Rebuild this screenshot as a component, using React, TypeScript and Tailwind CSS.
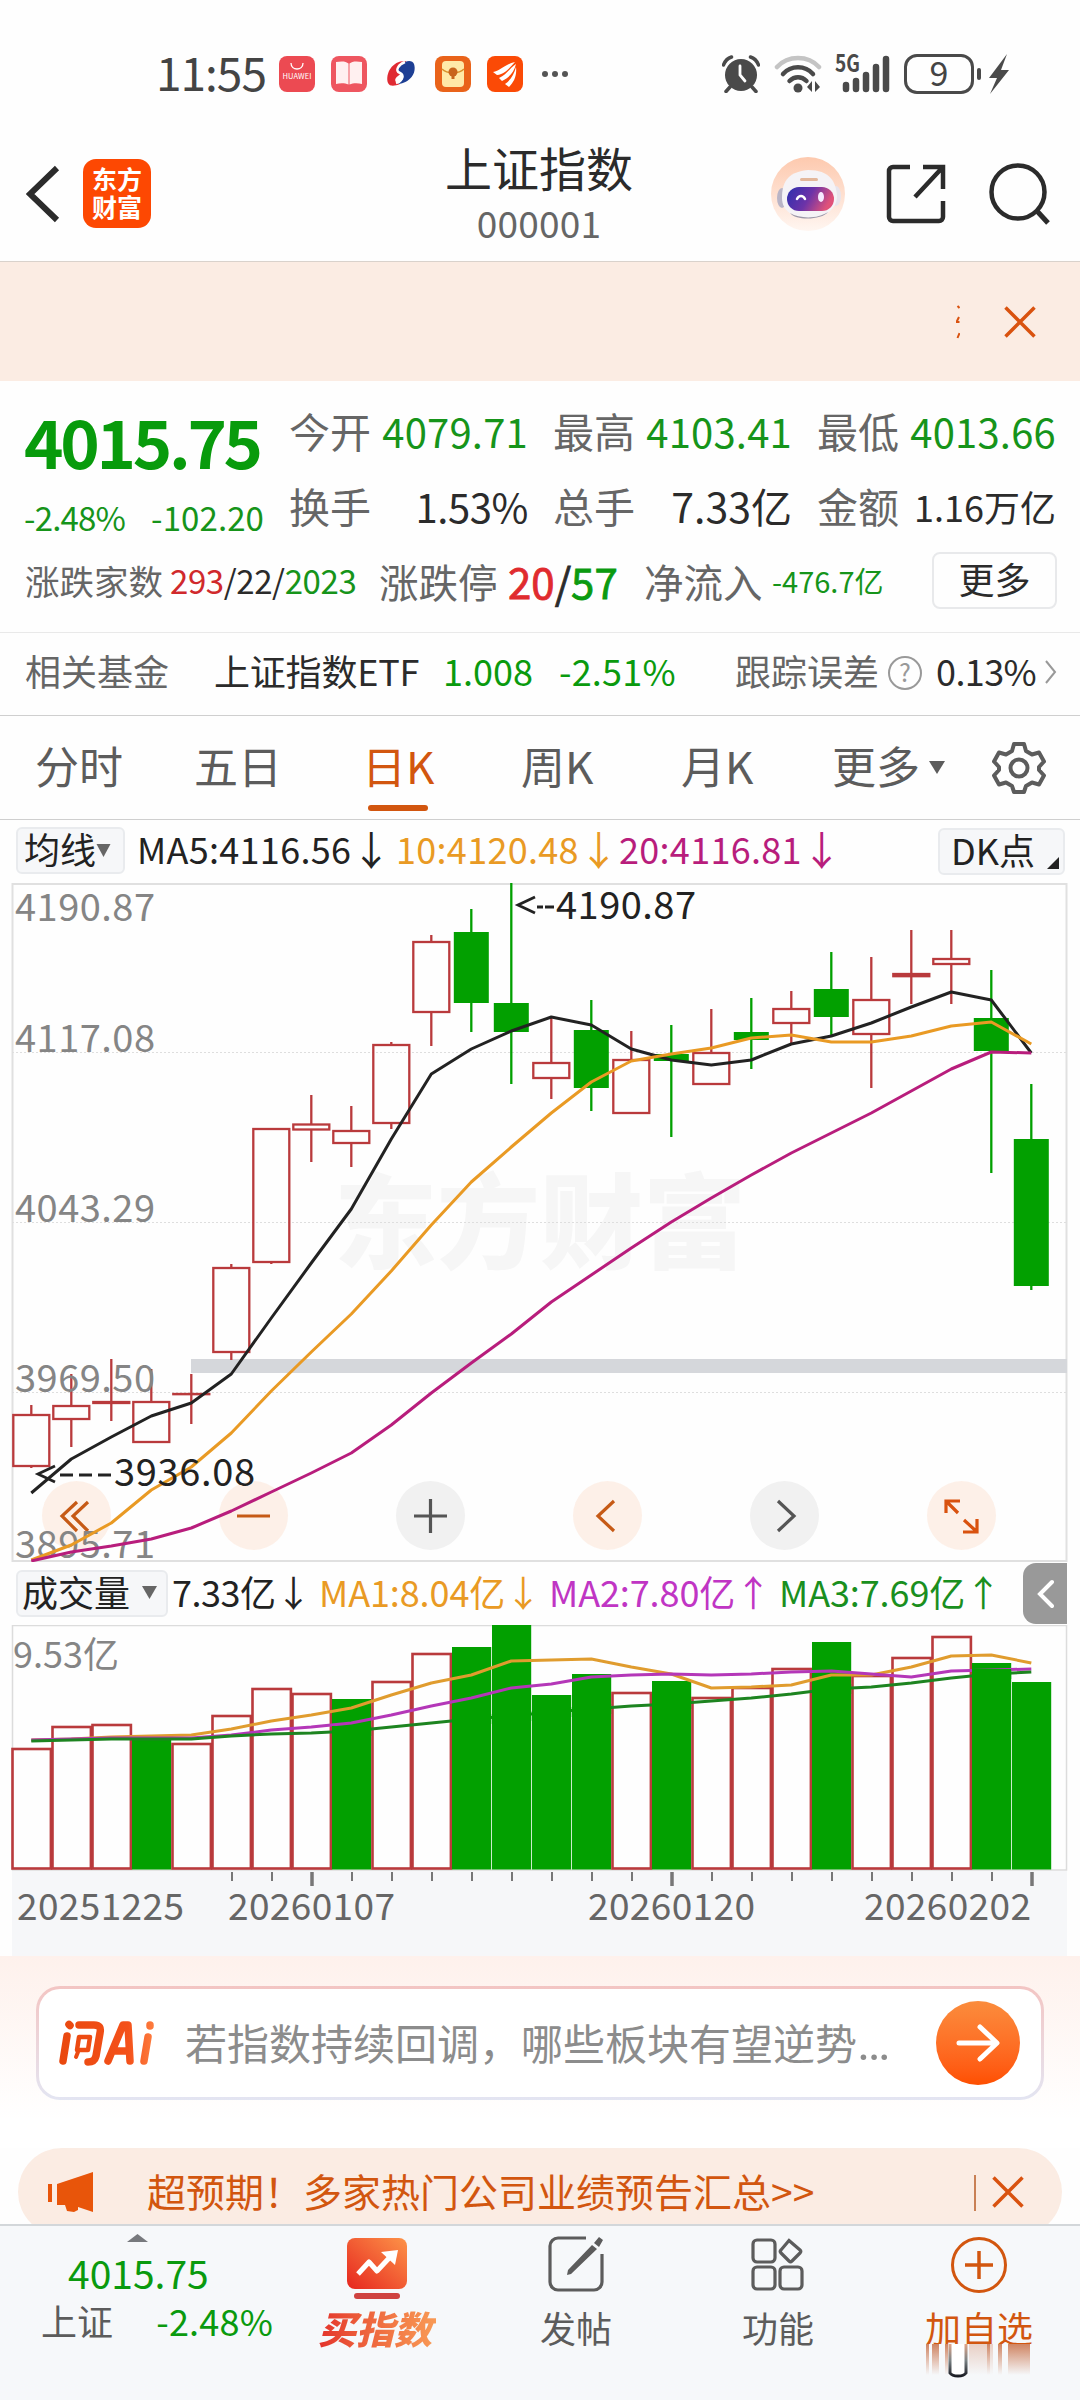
import React from 'react';

interface Candle {
  up: boolean;
  high: number;
  top: number;
  bottom: number;
  low: number;
}

const X0 = 31.3;
const STEP = 40;

const candles: Candle[] = [
  { up: true, high: 1405, top: 1415, bottom: 1466, low: 1468 },
  { up: true, high: 1374, top: 1406, bottom: 1419, low: 1447 },
  { up: true, high: 1359, top: 1402, bottom: 1403, low: 1421 },
  { up: true, high: 1369, top: 1402, bottom: 1442, low: 1442 },
  { up: true, high: 1374, top: 1394, bottom: 1394.2, low: 1424 },
  { up: true, high: 1264, top: 1268, bottom: 1352, low: 1360 },
  { up: true, high: 1129, top: 1129, bottom: 1262, low: 1264 },
  { up: true, high: 1095, top: 1124.5, bottom: 1129.5, low: 1162 },
  { up: true, high: 1106, top: 1131, bottom: 1143, low: 1167 },
  { up: true, high: 1042, top: 1045, bottom: 1123, low: 1129 },
  { up: true, high: 935, top: 942, bottom: 1012, low: 1046 },
  { up: false, high: 909, top: 932, bottom: 1003, low: 1032 },
  { up: false, high: 883, top: 1003, bottom: 1032, low: 1084 },
  { up: true, high: 1018, top: 1063, bottom: 1078, low: 1099 },
  { up: false, high: 1000, top: 1030, bottom: 1088, low: 1111 },
  { up: true, high: 1031, top: 1060, bottom: 1113, low: 1114 },
  { up: false, high: 1025, top: 1054, bottom: 1061, low: 1137 },
  { up: true, high: 1009, top: 1053, bottom: 1084, low: 1084 },
  { up: false, high: 998, top: 1032, bottom: 1040, low: 1069 },
  { up: true, high: 991, top: 1009, bottom: 1023, low: 1044 },
  { up: false, high: 952, top: 989, bottom: 1017, low: 1035 },
  { up: true, high: 957, top: 1000, bottom: 1034, low: 1088 },
  { up: true, high: 930, top: 974, bottom: 976.2, low: 1004 },
  { up: true, high: 930, top: 959, bottom: 964, low: 1004 },
  { up: false, high: 970, top: 1018, bottom: 1051, low: 1173 },
  { up: false, high: 1084, top: 1139, bottom: 1286, low: 1290 },
];

const ma5 = [1493, 1459, 1437, 1416, 1403, 1374, 1318, 1263, 1209, 1139, 1074, 1049, 1031, 1017, 1025, 1049, 1060, 1065, 1060, 1044, 1036, 1023, 1007, 992, 1000, 1053];
const ma10 = [1560, 1545, 1523, 1490, 1467, 1433, 1391, 1352, 1314, 1271, 1225, 1182, 1147, 1113, 1082, 1061, 1054, 1048, 1038, 1035, 1042, 1042, 1036, 1026, 1022, 1044];
const ma20 = [1561, 1552, 1546, 1539, 1528, 1511, 1492, 1473, 1453, 1425, 1393, 1363, 1334, 1302, 1275, 1248, 1222, 1198, 1175, 1153, 1133, 1113, 1091, 1069, 1052, 1053];

const volumeTops = [1749, 1727, 1725, 1737, 1744, 1716, 1689, 1694, 1699, 1682, 1654, 1647, 1625, 1695, 1674, 1693, 1681, 1698, 1688, 1669, 1642, 1676, 1658, 1637, 1663, 1682];
const volumeUp = [1, 1, 1, 0, 1, 1, 1, 1, 0, 1, 1, 0, 0, 0, 0, 1, 0, 1, 1, 1, 0, 1, 1, 1, 0, 0];
const vol1 = [1740, 1739, 1737, 1736, 1735, 1729, 1721, 1715, 1708, 1695, 1683, 1675, 1661, 1660, 1659, 1667, 1674, 1688, 1687, 1685, 1675, 1675, 1667, 1656, 1655, 1663];
const vol2 = [1740, 1739, 1738, 1738, 1738, 1735, 1730, 1727, 1723, 1715, 1706, 1698, 1688, 1684, 1677, 1675, 1674, 1675, 1674, 1672, 1671, 1674, 1677, 1671, 1670, 1669];
const vol3 = [1741, 1740, 1739, 1739, 1739, 1736, 1734, 1733, 1731, 1727, 1723, 1719, 1716, 1712, 1709, 1706, 1704, 1701, 1698, 1694, 1689, 1687, 1683, 1678, 1674, 1672];

const RED = '#b93a3c';
const GREEN = '#02a000';

const toPoints = (ys: number[]) => ys.map((y, i) => `${X0 + STEP * i},${y}`).join(' ');

const StatusBar: React.FC = () => (
  <div className="flex h-[126px] shrink-0 items-center pt-[22px] text-[#444]">
    <span className="ml-[156px] w-[123px] pb-[6px] text-[46px] leading-none tracking-[-1px]">11:55</span>
    <div className="flex items-center gap-4">
      <svg className="h-9 w-9" viewBox="0 0 36 36">
        <rect width="36" height="36" rx="8" fill="#ec4a52" />
        <path d="M12 7c0 8 12 8 12 0" fill="none" stroke="#fff" strokeWidth="1.3" />
        <text x="3.5" y="23" fontSize="7.5" fill="#fff" textLength="29">HUAWEI</text>
      </svg>
      <svg className="h-9 w-9" viewBox="0 0 36 36">
        <rect width="36" height="36" rx="8" fill="#ee5660" />
        <path d="M5 6c5-1 10-1 12.500 1.500v21C14 27 9 27 5 28zM31 6c-5-1-10-1-12.500 1.500v21C22 27 27 27 31 28z" fill="#fff0f0" />
      </svg>
      <svg className="h-9 w-9" viewBox="0 0 36 36">
        <path d="M23 5C10 4 2 17 5 27c2 4 7 3 12 1-6-2-6-5-2-8 5-3 4-8 8-15z" fill="#e02a32" />
        <path d="M22 6c-6 2-11 9-5 11 6 3 3 8-2 11 12-1 19-11 16-20-1-3-5-4-9-2z" fill="#1d3f94" />
        <path d="M22 6c-6 2-11 9-5 11 5 2 2 8-4 10" fill="none" stroke="#fff" strokeWidth="2.500" />
      </svg>
      <svg className="h-9 w-9" viewBox="0 0 36 36">
        <rect width="36" height="36" rx="8" fill="#e9631a" />
        <rect x="7" y="5" width="22" height="26" rx="4" fill="#ffe9a8" />
        <path d="M7 13c5 5 17 5 22 0" fill="none" stroke="#d9912c" strokeWidth="1.500" />
        <circle cx="18" cy="16" r="4.500" fill="#c8641c" />
        <path d="M18 16v7" stroke="#c8641c" strokeWidth="3" />
      </svg>
      <svg className="h-9 w-9" viewBox="0 0 36 36">
        <rect width="36" height="36" rx="8" fill="#fb4a06" />
        <path d="M6 16C13 15 18 8 28 6c-5 5-9 12-18 13zM12 22c7-3 10-9 17-14-2 8-6 13-14 17zM18 28c6-4 9-10 11-17 1 9-2 15-7 20z" fill="#fff" />
      </svg>
    </div>
    <div className="ml-[19px] flex gap-[4px]">
      <i className="h-[6px] w-[6px] rounded-full bg-[#555]" />
      <i className="h-[6px] w-[6px] rounded-full bg-[#555]" />
      <i className="h-[6px] w-[6px] rounded-full bg-[#555]" />
    </div>
    <svg className="ml-[154px] h-[38px] w-[38px]" viewBox="0 0 38 38">
      <ellipse cx="19" cy="20" rx="16" ry="16" fill="#4a4a4a" />
      <path d="M18 11v9l5 6" fill="none" stroke="#fff" strokeWidth="2.800" strokeLinecap="round" />
      <path d="M1.500 10C3 6 6 3 9.500 2M36.500 10C35 6 32 3 28.500 2M8 32l-4 4.500M30 32l4 4.500" fill="none" stroke="#4a4a4a" strokeWidth="3.500" strokeLinecap="round" />
    </svg>
    <svg className="ml-[14px] h-[40px] w-[48px]" viewBox="0 0 48 40">
      <g fill="none" strokeWidth="4.500" strokeLinecap="round">
        <path d="M3 13C14 1 34 1 45 13" stroke="#c4c4c4" />
        <path d="M9 20c8-9 22-9 30 0" stroke="#4a4a4a" />
        <path d="M15.500 27c5-5 12-5 17 0" stroke="#4a4a4a" />
      </g>
      <circle cx="24" cy="34" r="4.500" fill="#4a4a4a" />
      <path d="M38 27v11l-5-5zM41 38V27l5 6z" fill="#4a4a4a" />
    </svg>
    <svg className="ml-[13px] h-[40px] w-[56px]" viewBox="0 0 56 40">
      <text x="0" y="18" fontSize="24" fontWeight="700" fill="#4a4a4a" textLength="25" lengthAdjust="spacingAndGlyphs">5G</text>
      <g stroke="#4a4a4a" strokeWidth="6.500" strokeLinecap="round">
        <path d="M11 31v4M21 27v8M31 21v14M41 13v22M51 5v30" />
      </g>
    </svg>
    <div className="ml-[13px] flex h-[40px] w-[70px] items-center justify-center rounded-[13px] border-3 border-[#4a4a4a] pb-1 text-[34px] leading-none">9</div>
    <i className="ml-[3px] h-[12px] w-[4px] rounded bg-[#4a4a4a]" />
    <svg className="ml-[8px] h-[40px] w-[20px]" viewBox="0 0 20 40">
      <path d="M18 0L0 24h8L1 40l19-24h-8z" fill="#4a4a4a" />
    </svg>
  </div>
);

const Header: React.FC = () => (
  <div className="flex h-[136px] shrink-0 items-center border-b border-[#d9d2cc]">
    <svg className="ml-[26px] h-[60px] w-[34px]" viewBox="0 0 34 60">
      <path d="M31 4L4 30l27 26" fill="none" stroke="#2b2b2b" strokeWidth="6" />
    </svg>
    <div className="ml-[23px] flex h-[69px] w-[68px] flex-col items-center justify-center rounded-[13px] bg-[#fd4802] pb-1 text-[25px] leading-[28px] font-bold text-white">
      <span>东方</span>
      <span>财富</span>
    </div>
    <div className="flex w-[776px] flex-col items-center pb-[4px]">
      <div className="text-[47px] leading-[48px] text-[#2b2b2b]">上证指数</div>
      <div className="mt-[13px] text-[37px] leading-[36px] tracking-[0.2px] text-[#666]">000001</div>
    </div>
    <div className="-ml-[157px] flex items-center">
      <svg className="h-[76px] w-[76px]" viewBox="0 0 76 76">
        <defs>
          <linearGradient id="halo" x1="0" y1="0" x2="0" y2="1">
            <stop offset="0" stopColor="#fdc9ae" />
            <stop offset="1" stopColor="#fff6f1" />
          </linearGradient>
          <linearGradient id="visor" x1="0" y1="0" x2="1" y2="0.3">
            <stop offset="0" stopColor="#2c2fae" />
            <stop offset="0.55" stopColor="#6d33a8" />
            <stop offset="1" stopColor="#e0527a" />
          </linearGradient>
        </defs>
        <circle cx="38" cy="38" r="37" fill="url(#halo)" />
        <ellipse cx="12" cy="42" rx="5" ry="10" fill="#b9b4c6" />
        <ellipse cx="66" cy="40" rx="5" ry="10" fill="#e8e4ec" />
        <path d="M12 42c0-14 4-26 26-28 22 0 28 12 29 26 0 13-12 22-28 22S12 55 12 42z" fill="#f5f3f6" />
        <rect x="30" y="22" width="18" height="3" rx="1.500" fill="#e3b79b" />
        <path d="M20 57c10 6 28 6 38-1-6 8-32 9-38 1z" fill="#9b97a8" />
        <rect x="17" y="31" width="47" height="24" rx="12" fill="url(#visor)" />
        <path d="M27 43c2-4 6-4 8 0" fill="none" stroke="#fff" strokeWidth="2.500" strokeLinecap="round" />
        <ellipse cx="51" cy="41" rx="3" ry="5" fill="#f6e9ff" />
      </svg>
      <svg className="ml-[39px] h-[62px] w-[62px]" viewBox="0 0 62 62">
        <path d="M25 4H8a4 4 0 0 0-4 4v46a4 4 0 0 0 4 4h46a4 4 0 0 0 4-4V38M38 4h20v22M57 5L30 34" fill="none" stroke="#2b2b2b" strokeWidth="4.500" />
      </svg>
      <svg className="ml-[42px] h-[62px] w-[62px]" viewBox="0 0 62 62">
        <circle cx="29" cy="29" r="26.500" fill="none" stroke="#2b2b2b" strokeWidth="4.500" />
        <path d="M48 48l11 12" stroke="#2b2b2b" strokeWidth="5" />
      </svg>
    </div>
  </div>
);

const CloseIcon: React.FC<{ className: string }> = ({ className }) => (
  <svg className={className} viewBox="0 0 32 32">
    <path d="M1.500 1.500l29 29M30.500 1.500l-29 29" fill="none" stroke="#d9520f" strokeWidth="3.500" />
  </svg>
);

const TopNotice: React.FC = () => (
  <div className="flex h-[119px] shrink-0 items-center justify-end bg-[#fbece3] pr-[44px]">
    <svg className="mr-[44px] h-[34px] w-[4px]" viewBox="0 0 4 34">
      <path d="M1.500 1l2 2M3 12l-2.500 5h3M3.500 28l-2 5" fill="none" stroke="#d9520f" strokeWidth="2" />
    </svg>
    <CloseIcon className="h-8 w-8" />
  </div>
);

const quoteCells = [
  { label: '今开', value: '4079.71', style: 'text-[40px] tracking-[0.2px] text-[#16941a]' },
  { label: '最高', value: '4103.41', style: 'text-[40px] tracking-[0.2px] text-[#16941a]' },
  { label: '最低', value: '4013.66', style: 'text-[40px] tracking-[0.2px] text-[#16941a]' },
  { label: '换手', value: '1.53%', style: 'text-[40px] text-[#2b2b2b] tracking-[-0.4px]' },
  { label: '总手', value: '7.33亿', style: 'text-[41px] text-[#2b2b2b]' },
  { label: '金额', value: '1.16万亿', style: 'text-[36px] text-[#2b2b2b]' },
];

const Quote: React.FC = () => (
  <div className="shrink-0 whitespace-nowrap">
    <div className="flex h-[169px] pt-[12px] leading-none">
      <div className="w-[264px] pt-[2px] pl-[24px] text-[#16941a]">
        <div className="flex h-[88px] items-center text-[67px] font-bold tracking-[-3.3px] text-[#089b0c]">4015.75</div>
        <div className="flex h-[68px] items-center justify-between text-[33px]">
          <span className="tracking-[-0.8px]">-2.48%</span>
          <span className="tracking-[0.1px]">-102.20</span>
        </div>
      </div>
      <div className="ml-[25px] grid w-[768px] grid-cols-[239px_239px_239px] grid-rows-[75px_75px] gap-x-[25px]">
        {quoteCells.map((cell) => (
          <div key={cell.label} className="flex items-center justify-between">
            <span className="text-[41px] text-[#666]">{cell.label}</span>
            <span className={cell.style}>{cell.value}</span>
          </div>
        ))}
      </div>
    </div>
    <div className="flex h-[82px] items-center pb-[21px] leading-none text-[#666]">
      <span className="ml-[25px] w-[145px] text-[34.500px]">涨跌家数</span>
      <span className="w-[209px] text-[33px] tracking-[-0.4px] text-[#2b2b2b]">
        <span className="text-[#d0292c]">293</span>/22/<span className="text-[#16941a]">2023</span>
      </span>
      <span className="w-[129px] text-[39.500px]">涨跌停</span>
      <span className="w-[136px] text-[42px] text-[#2b2b2b] [-webkit-text-stroke:0.8px]">
        <span className="text-[#e02b2e]">20</span>/<span className="text-[#0b9a10]">57</span>
      </span>
      <span className="w-[128px] text-[39.500px]">净流入</span>
      <span className="w-[160px] text-[29px] text-[#16941a]">-476.7亿</span>
      <span className="flex h-[57px] w-[125px] items-center justify-center rounded-lg border-2 border-[#e8e9eb] pb-[5px] text-[36px] text-[#2b2b2b]">更多</span>
    </div>
  </div>
);

const FundRow: React.FC = () => (
  <div className="flex h-[84px] shrink-0 items-center border-y border-t-[#e9e9e9] border-b-[#cfcfcf] pb-[9px] text-[36px] leading-none whitespace-nowrap text-[#2b2b2b]">
    <span className="ml-[25px] w-[189px] text-[#666]">相关基金</span>
    <span className="w-[229px] tracking-[-0.2px]">上证指数ETF</span>
    <span className="w-[116px] text-[#0a9a0e]">1.008</span>
    <span className="w-[176px] tracking-[0.2px] text-[#0a9a0e]">-2.51%</span>
    <span className="text-[#666]">跟踪误差</span>
    <span className="mt-[7px] ml-[9px] flex h-[34px] w-[34px] items-center justify-center rounded-full border-2 border-[#999] pb-1 text-[25px] text-[#999]">?</span>
    <span className="ml-[14px] tracking-[-0.6px]">0.13%</span>
    <svg className="mt-1 ml-[9px] h-[24px] w-[12px]" viewBox="0 0 12 24">
      <path d="M1 1l9 11-9 11" fill="none" stroke="#999" strokeWidth="2" />
    </svg>
  </div>
);

const Tabs: React.FC = () => (
  <div className="flex h-[104px] shrink-0 items-center border-b border-[#cfcfcf] text-[44px] leading-none whitespace-nowrap text-[#5c5c5c]">
    <span className="ml-[35px] w-[159px] pb-[6px]">分时</span>
    <span className="w-[168px] pb-[6px]">五日</span>
    <span className="relative w-[159px] pb-[6px] text-[#d2560f]">
      日K
      <i className="absolute top-[62px] left-[6px] h-[6px] w-[60px] rounded-full bg-[#d2560f]" />
    </span>
    <span className="w-[160px] pb-[6px]">周K</span>
    <span className="w-[151px] pb-[6px]">月K</span>
    <span className="pb-[6px]">更多</span>
    <svg className="ml-[9px] h-[13px] w-[16px]" viewBox="0 0 16 13">
      <path d="M0 0h16L8 13z" fill="#5c5c5c" />
    </svg>
    <svg className="ml-[47px] h-[52px] w-[54px]" viewBox="0 0 54 52">
      <path d="M22 2h10l2 7 6 3.500 7-2 5 9-5 5.500v3l5 5.500-5 9-7-2-6 3.500-2 6H22l-2-6-6-3.500-7 2-5-9L7 28v-3l-5-5.500 5-9 7 2L20 9z" fill="none" stroke="#5c5c5c" strokeWidth="4" strokeLinejoin="round" />
      <circle cx="27" cy="26" r="8.500" fill="none" stroke="#5c5c5c" strokeWidth="4" />
    </svg>
  </div>
);

const MaRow: React.FC = () => (
  <div className="flex h-[63px] shrink-0 items-center pb-[3px] text-[36px] leading-none whitespace-nowrap text-[#222]">
    <span className="ml-[16px] flex h-[47px] w-[109px] items-center rounded-md border-2 border-[#e9ebee] bg-[#f6f7f9] pb-1 pl-[6px]">
      均线
      <svg className="mt-1 h-[13px] w-[15px]" viewBox="0 0 14 13">
        <path d="M0 0h14L7 13z" fill="#666" />
      </svg>
    </span>
    <span className="ml-[12px] flex w-[259px] items-center pb-1 tracking-[0.3px]">
      MA5:4116.56<span className="text-[40px]">↓</span>
    </span>
    <span className="flex w-[223px] items-center pb-1 tracking-[0.3px] text-[#e99a24]">
      10:4120.48<span className="text-[40px]">↓</span>
    </span>
    <span className="flex w-[319px] items-center pb-1 tracking-[0.3px] text-[#b81d7c]">
      20:4116.81<span className="text-[40px]">↓</span>
    </span>
    <span className="relative mt-[3px] flex h-[47px] w-[127px] items-center rounded-md border-2 border-[#e9ebee] bg-[#f6f7f9] pb-[6px] pl-[11px]">
      DK点
      <svg className="absolute right-[4px] bottom-[4px] h-[12px] w-[12px]" viewBox="0 0 12 12">
        <path d="M12 0v12H0z" fill="#222" />
      </svg>
    </span>
  </div>
);

const priceLabels = [
  { text: '4190.87', y: 921 },
  { text: '4117.08', y: 1052 },
  { text: '4043.29', y: 1221.5 },
  { text: '3969.50', y: 1391.5 },
  { text: '3895.71', y: 1558 },
];

const controls = [
  { name: 'first', circle: 'bg-[#fdeee6]/90 text-[#c65a16]', path: 'M35 21L20 35l15 15M46 21L31 35l15 15' },
  { name: 'out', circle: 'bg-[#fdeee6]/90 text-[#c65a16]', path: 'M18 35h33' },
  { name: 'in', circle: 'bg-[#f1f1f1] text-[#555]', path: 'M18 35h33M34.500 18v34' },
  { name: 'prev', circle: 'bg-[#fdeee6]/90 text-[#c65a16]', path: 'M41 20L25 35l16 15' },
  { name: 'next', circle: 'bg-[#f1f1f1] text-[#555]', path: 'M28 20l16 15-16 15' },
  { name: 'full', circle: 'bg-[#fdeee6]/90 text-[#d9520f]', path: 'M19 32V20h14M20 21l11 11M50 38v13H36M49 50L37 39' },
];

const PriceChart: React.FC = () => (
  <div className="relative h-[679px] shrink-0">
    <svg className="block h-[679px] w-[1080px]" viewBox="0 883 1080 679">
      <rect x="12.500" y="884" width="1054" height="677" fill="none" stroke="#e0e0e0" strokeWidth="2" />
      <text x="334" y="1261" fontSize="103" fontWeight="900" fill="#f6f6f6" textLength="412">东方财富</text>
      {[1052.5, 1222.5, 1392.5].map((y) => (
        <path key={y} d={`M12 ${y}h1055`} stroke="#dedede" strokeDasharray="2 2" />
      ))}
      <rect x="191" y="1359" width="876" height="14" fill="#d5d7db" />
    </svg>
    <div className="absolute top-[598px] left-[42px] flex gap-[108px]">
      {controls.map((c) => (
        <div key={c.name} className={`h-[69px] w-[69px] rounded-full ${c.circle}`}>
          <svg viewBox="0 0 69 69">
            <path d={c.path} fill="none" stroke="currentColor" strokeWidth="3.200" />
          </svg>
        </div>
      ))}
    </div>
    <svg className="absolute top-0 left-0 h-[679px] w-[1080px]" viewBox="0 883 1080 679">
      {candles.map((c, i) => {
        const x = X0 + STEP * i;
        const color = c.up ? RED : GREEN;
        return (
          <g key={i} stroke={color} strokeWidth="2.300">
            <path d={`M${x} ${c.high}V${c.top}M${x} ${c.bottom}V${c.low}`} />
            {c.up ? (
              <rect x={x - 18} y={c.top} width="36" height={c.bottom - c.top} fill="none" />
            ) : (
              <rect x={x - 17.5} y={c.top} width="35" height={c.bottom - c.top} fill={GREEN} stroke="none" />
            )}
          </g>
        );
      })}
      <g fontSize="38" fill="#858585">
        {priceLabels.map((l) => (
          <text key={l.text} x="15" y={l.y} textLength="140">{l.text}</text>
        ))}
      </g>
      <g fill="none" strokeWidth="3" strokeLinejoin="round">
        <polyline points={toPoints(ma5)} stroke="#222" />
        <polyline points={toPoints(ma10)} stroke="#e99a24" />
        <polyline points={toPoints(ma20)} stroke="#b81d7c" />
      </g>
      <g fontSize="38" fill="#222">
        <text x="556" y="919" textLength="140">4190.87</text>
        <text x="114" y="1486" textLength="141">3936.08</text>
      </g>
      <g fill="none" stroke="#222" strokeWidth="2.800">
        <path d="M535 897l-17 8 17 8M537 907h6M545 907h9" />
        <path d="M55 1466l-17 8 17 8M60 1475h13M79 1475h13M98 1475h13" />
      </g>
    </svg>
  </div>
);

const VolumeHeader: React.FC = () => (
  <div className="flex h-[63px] shrink-0 items-center text-[36px] leading-none whitespace-nowrap text-[#222]">
    <span className="ml-[16px] flex h-[47px] w-[152px] items-center rounded-md border-2 border-[#e9ebee] bg-[#f6f7f9] pb-[6px] pl-[4px]">
      成交量
      <svg className="mt-1 ml-[12px] h-[13px] w-[15px]" viewBox="0 0 15 13">
        <path d="M0 0h15L7.500 13z" fill="#666" />
      </svg>
    </span>
    <span className="ml-[4px] w-[147px] pb-[6px] tracking-[-0.5px]">7.33亿↓</span>
    <span className="w-[230px] pb-[6px] tracking-[-0.1px] text-[#e99a24]">MA1:8.04亿↓</span>
    <span className="w-[230px] pb-[6px] tracking-[-0.1px] text-[#c035c4]">MA2:7.80亿↑</span>
    <span className="w-[244px] pb-[6px] tracking-[-0.1px] text-[#1a8f1e]">MA3:7.69亿↑</span>
    <span className="flex h-[61px] w-[44px] items-center justify-center rounded-l-[13px] bg-[#999]">
      <svg className="h-[30px] w-[18px]" viewBox="0 0 18 30">
        <path d="M16 3L4 15l12 12" fill="none" stroke="#fff" strokeWidth="4" strokeLinecap="round" />
      </svg>
    </span>
  </div>
);

const dates = [
  { text: '20251225', x: 17 },
  { text: '20260107', x: 228 },
  { text: '20260120', x: 588 },
  { text: '20260202', x: 864 },
];

const VolumeChart: React.FC = () => (
  <svg className="block h-[331px] w-[1080px] shrink-0" viewBox="0 1625 1080 331">
    <rect x="12" y="1871" width="1055" height="85" fill="#f6f7f9" />
    <rect x="12.500" y="1625.500" width="1054" height="244.500" fill="none" stroke="#dcdcdc" strokeWidth="1.500" />
    <text x="13" y="1668" fontSize="36" fill="#858585">9.53亿</text>
    {volumeTops.map((top, i) => {
      const x = X0 + STEP * i;
      return volumeUp[i] ? (
        <rect key={i} x={x - 18.8} y={top} width="38.400" height={1868.5 - top} fill="none" stroke={RED} strokeWidth="2.600" />
      ) : (
        <rect key={i} x={x - 19.3} y={top} width="39.200" height={1869.5 - top} fill={GREEN} />
      );
    })}
    <g fill="none" strokeWidth="3" strokeLinejoin="round">
      <polyline points={toPoints(vol1)} stroke="#e09c2e" />
      <polyline points={toPoints(vol2)} stroke="#b437b8" />
      <polyline points={toPoints(vol3)} stroke="#1d8420" />
    </g>
    {/* the MA3 line merges with the solid bars it crosses */}
    {volumeTops.map((top, i) =>
      volumeUp[i] || vol3[i] - top < 9 ? null : (
        <rect key={i} x={X0 + STEP * i - 19.3} y={vol3[i] - 5} width="39.200" height="10" fill={GREEN} />
      )
    )}
    {Array.from({ length: 21 }, (_, k) => {
      const i = k + 5;
      const major = i === 7 || i === 16 || i === 25;
      return <path key={i} d={`M${X0 + 0.7 + STEP * i} 1872v${major ? 14 : 9}`} stroke="#777" strokeWidth={major ? 3.5 : 2} />;
    })}
    <g fontSize="37" fill="#666">
      {dates.map((d) => (
        <text key={d.text} x={d.x} y="1920" textLength="167">{d.text}</text>
      ))}
    </g>
  </svg>
);

const AskAi: React.FC = () => (
  <div className="h-[192px] shrink-0 bg-linear-to-b from-[#fef1ec] to-white to-85% px-[36px] pt-[30px]">
    <div className="h-[114px] rounded-[24px] bg-linear-to-b from-[#f3c5c3] to-[#e3e5f2] p-[3px]">
      <div className="flex h-full items-center rounded-[21px] bg-white">
        <svg className="ml-[19px] h-[48px] w-[100px] shrink-0" viewBox="0 0 100 48">
          <defs>
            <linearGradient id="ask" gradientUnits="userSpaceOnUse" x1="0" y1="0" x2="100" y2="0">
              <stop offset="0" stopColor="#e9480e" />
              <stop offset="0.7" stopColor="#f4511a" />
              <stop offset="1" stopColor="#ff8344" />
            </linearGradient>
          </defs>
          <g fill="none" stroke="url(#ask)" strokeLinejoin="round" strokeLinecap="round">
            <path d="M9 17L5 42M11 5.500l1 1M21 6h15c6 0 7 3 6 8l-4 23c-1 4-3 6-8 6M50 42L65 6h5l2 36M58 32h13M90 18l-4 24M92 6v1" strokeWidth="7.500" />
            <path d="M21 18h11l-2 13H19z" strokeWidth="4.500" />
            <path d="M20 33l-2 5" strokeWidth="4" />
          </g>
        </svg>
        <span className="ml-[27px] text-[42px] leading-none whitespace-nowrap text-[#8c8c8c]">
          若指数持续回调，哪些板块有望逆势<span className="font-['Roboto'] text-[50px] leading-none">…</span>
        </span>
        <span className="mr-[21px] ml-auto flex h-[84px] w-[84px] shrink-0 items-center justify-center rounded-full bg-linear-to-t from-[#fe4f00] to-[#fb8c3c]">
          <svg className="h-[40px] w-[44px]" viewBox="0 0 44 40">
            <path d="M3 20h37M24 4l17 16-17 16" fill="none" stroke="#fff" strokeWidth="5" strokeLinecap="round" strokeLinejoin="round" />
          </svg>
        </span>
      </div>
    </div>
  </div>
);

const PromoBar: React.FC = () => (
  <div className="h-[76px] shrink-0 overflow-hidden px-[18px]">
    <div className="flex h-[88px] items-center rounded-[44px] bg-[#fbece3]">
      <svg className="ml-[30px] h-[40px] w-[46px]" viewBox="0 0 46 40">
        <path d="M0 12h4v18H0zM9 12L45 0v40L30 35v3l-4 2-7-1-2-6H9z" fill="#e8550a" />
      </svg>
      <span className="ml-[53px] w-[827px] pb-1 text-[39px] leading-none whitespace-nowrap text-[#d2560f]">超预期！多家热门公司业绩预告汇总&gt;&gt;</span>
      <i className="mt-[2px] h-[36px] w-[2px] bg-[#c98055]" />
      <CloseIcon className="ml-[16px] h-8 w-8" />
    </div>
  </div>
);

const BottomNav: React.FC = () => (
  <div className="flex h-[176px] shrink-0 items-start border-t-2 border-[#d3d7da] bg-[#f6f8fa] leading-none whitespace-nowrap">
    <div className="ml-[41px] w-[232px] pt-[8px]">
      <svg className="ml-[86px] h-[8px] w-[21px]" viewBox="0 0 21 8">
        <path d="M0 8L10.500 0 21 8z" fill="#77797d" />
      </svg>
      <div className="mt-[11px] ml-[27px] text-[39px] text-[#0a9a0e]">4015.75</div>
      <div className="mt-[10px] flex justify-between text-[36px]">
        <span className="text-[#5c5c5c]">上证</span>
        <span className="tracking-[0.2px] text-[#0a9a0e]">-2.48%</span>
      </div>
    </div>
    <div className="ml-[36px] flex w-[136px] flex-col items-center pt-[12px]">
      <svg className="h-[62px] w-[60px]" viewBox="0 0 60 62">
        <defs>
          <linearGradient id="buy" x1="0" y1="1" x2="1" y2="0">
            <stop offset="0" stopColor="#e6261f" />
            <stop offset="1" stopColor="#fd9348" />
          </linearGradient>
        </defs>
        <rect width="60" height="51" rx="8" fill="url(#buy)" />
        <rect x="7" y="55" width="46" height="6" rx="3" fill="#cf4340" />
        <path d="M11 36L22 24l8 9 14-15" fill="none" stroke="#fff" strokeWidth="5" strokeLinejoin="round" />
        <path d="M34 14l17-2-3 15z" fill="#fff" />
      </svg>
      <span className="mt-[9px] bg-linear-to-r from-[#e3302b] to-[#f89a55] bg-clip-text pr-1 pb-2 text-[38px] font-black text-transparent italic">买指数</span>
    </div>
    <div className="ml-[63px] flex w-[136px] flex-col items-center pt-[10px] text-[#5c5c5c]">
      <svg className="h-[56px] w-[56px]" viewBox="0 0 56 56">
        <path d="M38 2H10a8 8 0 0 0-8 8v36a8 8 0 0 0 8 8h36a8 8 0 0 0 8-8V18" fill="none" stroke="currentColor" strokeWidth="3.200" />
        <path d="M46 7l5-6 4 3-4 7zM44 9l5 4-26 25-4 1 1-5z" fill="currentColor" />
      </svg>
      <span className="mt-[17px] text-[36px]">发帖</span>
    </div>
    <div className="ml-[66px] flex w-[136px] flex-col items-center pt-[11px] text-[#5c5c5c]">
      <svg className="h-[55px] w-[54px]" viewBox="0 0 54 55">
        <g fill="none" stroke="currentColor" strokeWidth="3.200">
          <rect x="2" y="3" width="22" height="22" rx="4" />
          <path d="M38 3.500L49 13q1.500 1.500 0 3L41 24q-1.500 1.500-3 0L30 16q-1.500-1.500 0-3z" />
          <rect x="2" y="30" width="22" height="22" rx="4" />
          <rect x="29" y="30" width="22" height="22" rx="4" />
        </g>
      </svg>
      <span className="mt-[17px] text-[36px]">功能</span>
    </div>
    <div className="ml-[65px] flex w-[136px] flex-col items-center pt-[10px] text-[#d2560f]">
      <svg className="h-[58px] w-[58px]" viewBox="0 0 58 58">
        <circle cx="29" cy="29" r="26.500" fill="none" stroke="currentColor" strokeWidth="3" />
        <path d="M15 29h28M29 15v28" stroke="currentColor" strokeWidth="3.500" />
      </svg>
      <span className="relative mt-[15px] text-[36px]">
        加自选
        {/* streaks fading out under the label */}
        <svg className="absolute top-[35px] left-0 h-[36px] w-[110px]" viewBox="0 0 110 36">
          <defs>
            <linearGradient id="streak" gradientUnits="userSpaceOnUse" x1="0" y1="0" x2="0" y2="31">
              <stop offset="0" stopColor="#cf8462" />
              <stop offset="1" stopColor="#f6f8fa" />
            </linearGradient>
            <linearGradient id="hook" gradientUnits="userSpaceOnUse" x1="0" y1="0" x2="0" y2="33">
              <stop offset="0" stopColor="#e0a488" />
              <stop offset="0.5" stopColor="#7c8486" />
              <stop offset="1" stopColor="#16171f" />
            </linearGradient>
          </defs>
          <rect width="110" height="36" fill="#f6f8fa" />
          <path d="M1 0h3v31H1zM7 0h7v31H7zM20 0h3v31h-3zM62 0h3v31h-3zM73 0h4v31h-4zM83 0h22v31H83z" fill="url(#streak)" />
          <path d="M44 0h18v31H44zM65 0h3v31h-3z" fill="url(#streak)" opacity="0.35" />
          <path d="M25 0v29q2 3 8 3t8-3V0" fill="#fff" stroke="url(#hook)" strokeWidth="3" />
        </svg>
      </span>
    </div>
  </div>
);

const App: React.FC = () => {
  return (
    <div className="flex h-[2400px] w-[1080px] flex-col overflow-hidden bg-[#fefefe] font-['Noto_Sans_CJK_SC',sans-serif]">
      <StatusBar />
      <Header />
      <TopNotice />
      <Quote />
      <FundRow />
      <Tabs />
      <MaRow />
      <PriceChart />
      <VolumeHeader />
      <VolumeChart />
      <AskAi />
      <PromoBar />
      <BottomNav />
    </div>
  );
};

export default App;
